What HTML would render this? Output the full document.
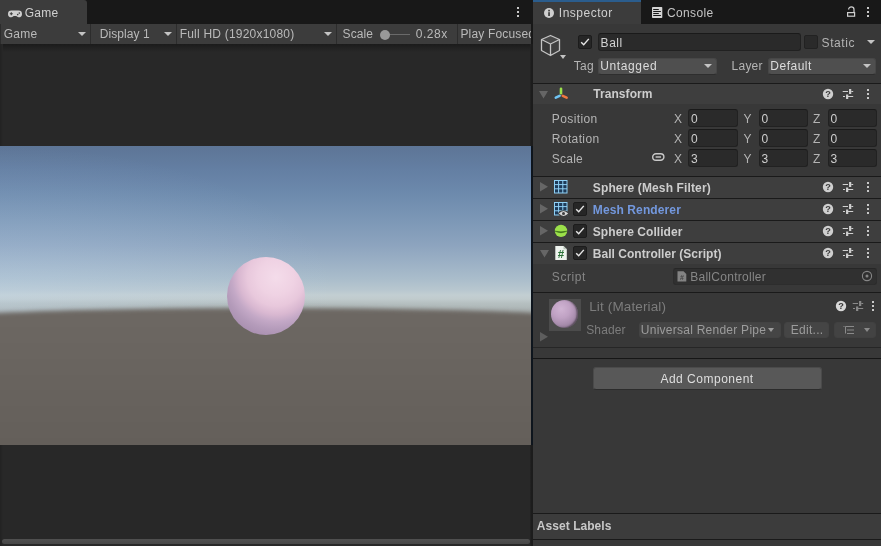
<!DOCTYPE html>
<html><head><meta charset="utf-8">
<style>
*{box-sizing:border-box;margin:0;padding:0}
html,body{width:881px;height:546px;overflow:hidden;background:#181818}
body{font-family:"Liberation Sans",sans-serif;font-size:12px;color:#bababa;position:relative}
.abs,svg{position:absolute}
.t{position:absolute;white-space:nowrap;line-height:14px;height:14px}
.b{font-weight:bold}
.fld{position:absolute;background:#2a2a2a;border:1px solid #212121;border-top-color:#1a1a1a;border-radius:3px;height:18px}
.dd{position:absolute;background:#4f4f4f;border:1px solid #474747;border-bottom-color:#2e2e2e;border-radius:3px;height:16.500px}
.arr{position:absolute;width:0;height:0;border-left:4px solid transparent;border-right:4px solid transparent;border-top:4.500px solid #c4c4c4}
.hdr{position:absolute;left:533px;width:348px;height:22px;background:#3e3e3e;border-top:1px solid #1a1a1a}
.cb{position:absolute;width:14px;height:14px;background:#262626;border:1px solid #1c1c1c;border-radius:2px}
.dot{position:absolute;width:2px;height:2px;background:#c8c8c8}
.sep{position:absolute;top:24px;width:1px;height:20px;background:#2c2c2c}
</style></head><body><div id="root" style="position:absolute;left:0;top:0;width:881px;height:546px;will-change:transform">

<div class="abs" style="left:0;top:0;width:533px;height:24px;background:#181818"></div>
<div class="abs" style="left:0;top:0;width:87px;height:24px;background:#3c3c3c;border-radius:0 3px 0 0"></div>
<svg style="left:7px;top:7.700px" width="16" height="12" viewBox="0 0 16 12"><path d="M4.400 2.500h7.200a3.400 3.400 0 0 1 0 6.800c-1 0-1.600-.5-2.200-1.200H6.600c-.6.700-1.200 1.200-2.200 1.200a3.400 3.400 0 0 1 0-6.800z" fill="#cfcfcf"/><path d="M4.300 4.300v3M2.800 5.800h3" stroke="#3c3c3c" stroke-width="1.100"/><circle cx="10.700" cy="6.600" r=".8" fill="#3c3c3c"/><circle cx="12.300" cy="5.100" r=".8" fill="#3c3c3c"/></svg>
<div class="t" style="left:24.70px;top:5.74px;line-height:14px;height:14px;letter-spacing:0.308px;color:#d0d0d0;">Game</div>
<div class="dot" style="left:517px;top:7px"></div>
<div class="dot" style="left:517px;top:11px"></div>
<div class="dot" style="left:517px;top:15px"></div>
<div class="abs" style="left:0;top:24px;width:531px;height:20px;background:#3c3c3c"></div>
<div class="sep" style="left:0"></div>
<div class="t" style="left:3.80px;top:26.94px;line-height:14px;height:14px;letter-spacing:0.241px;">Game</div>
<div class="arr" style="left:78px;top:32px"></div>
<div class="sep" style="left:90px"></div>
<div class="t" style="left:99.70px;top:26.94px;line-height:14px;height:14px;letter-spacing:0.069px;">Display 1</div>
<div class="arr" style="left:164px;top:32px"></div>
<div class="sep" style="left:176px"></div>
<div class="t" style="left:179.70px;top:26.94px;line-height:14px;height:14px;letter-spacing:0.210px;">Full HD (1920x1080)</div>
<div class="arr" style="left:324px;top:32px"></div>
<div class="sep" style="left:336px"></div>
<div class="t" style="left:342.60px;top:26.94px;line-height:14px;height:14px;letter-spacing:0.096px;">Scale</div>
<div class="abs" style="left:385px;top:34px;width:25px;height:1px;background:#6a6a6a"></div>
<div class="abs" style="left:380px;top:30px;width:10px;height:10px;border-radius:5px;background:#999"></div>
<div class="t" style="left:415.80px;top:26.94px;line-height:14px;height:14px;letter-spacing:0.512px;">0.28x</div>
<div class="sep" style="left:457px"></div>
<div class="t" style="left:460.40px;top:26.94px;line-height:14px;height:14px;letter-spacing:0.173px;width:70.600px;overflow:hidden;">Play Focused</div>
<div class="abs" style="left:0;top:44px;width:533px;height:502px;background:#282828"></div>
<div class="abs" style="left:0;top:44px;width:531px;height:8px;background:linear-gradient(#1b1b1b,#282828)"></div>
<div class="abs" style="left:530px;top:44px;width:3px;height:502px;background:linear-gradient(to right,#242424,#1c1c1c 1.500px)"></div>
<div class="abs" style="left:0;top:146px;width:531px;height:299px;overflow:hidden;background:linear-gradient(to bottom,#5d7596 0px,#647fa3 24px,#6c89ac 46px,#7c97b6 74px,#8ca3be 98px,#9bb0c5 116px,#aabdcb 133px,#b8c7cf 144px,#c2ced2 149px,#c0cbcd 153px,#b6c0c1 157px,#a9b1b1 166px)"><div class="abs" style="left:0;top:0;width:531px;height:175px;background:radial-gradient(ellipse 340px 150px at 0 150px,rgba(195,220,245,.26),rgba(195,220,245,0))"></div><div class="abs" style="left:-64.500px;top:161.500px;width:660px;height:170px;border-radius:330px 330px 0 0/12px 12px 0 0;background:linear-gradient(to bottom,#6d6863 0,#6b6661 30px,#645f5a 141px);filter:blur(2.200px)"></div></div>
<div class="abs" style="left:531px;top:146px;width:2px;height:299px;background:#0e151d"></div>
<div class="abs" style="left:227px;top:256.500px;width:78px;height:78px;border-radius:50%;background:radial-gradient(circle 60px at 63% 26%,#f4dcea 0%,#efd2e3 30%,#e8c8dc 48%,#d9b8d1 62%,#c3a8c6 74%,#b49bba 87%,#aa91b1 100%)"></div>
<div class="abs" style="left:0;top:44px;width:3px;height:102px;background:linear-gradient(to right,#222,#282828)"></div>
<div class="abs" style="left:0;top:445px;width:3px;height:101px;background:linear-gradient(to right,#222,#282828)"></div>
<div class="abs" style="left:2px;top:538.500px;width:528px;height:5.500px;border-radius:3px;background:linear-gradient(#505050,#474747)"></div>
<div class="abs" style="left:533px;top:0;width:348px;height:546px;background:#383838"></div>
<div class="abs" style="left:533px;top:0;width:348px;height:24px;background:#181818"></div>
<div class="abs" style="left:533px;top:0;width:108px;height:24px;background:#3c3c3c"></div>
<div class="abs" style="left:533px;top:0;width:108px;height:2px;background:#2b5d8d"></div>
<svg style="left:543px;top:7px" width="12" height="12" viewBox="0 0 12 12"><circle cx="6" cy="6" r="5" fill="#cfcfcf"/><rect x="5.200" y="5.200" width="1.700" height="3.800" fill="#3c3c3c"/><rect x="5.200" y="2.800" width="1.700" height="1.600" fill="#3c3c3c"/></svg>
<div class="t" style="left:558.80px;top:5.74px;line-height:14px;height:14px;letter-spacing:0.506px;color:#d0d0d0;">Inspector</div>
<svg style="left:652px;top:7px" width="11" height="11" viewBox="0 0 11 11"><rect x="0" y="0" width="10.300" height="11" rx=".8" fill="#d4d4d4"/><path d="M1.200 2.500H6.800M1.200 4.500H8.900M1.200 6.500H6.800M1.200 8.500H8.900" stroke="#181818" stroke-width="1"/></svg>
<div class="t" style="left:667.10px;top:5.74px;line-height:14px;height:14px;letter-spacing:0.329px;color:#c4c4c4;">Console</div>
<svg style="left:846px;top:6px" width="11" height="12" viewBox="0 0 11 12"><rect x="1.600" y="6.600" width="7" height="3.600" fill="none" stroke="#cfcfcf" stroke-width="1.200"/><path d="M2.600 3.600a2.700 2.700 0 0 1 5.400 0V6.600" fill="none" stroke="#cfcfcf" stroke-width="1.200"/></svg>
<div class="dot" style="left:867px;top:7px"></div>
<div class="dot" style="left:867px;top:11px"></div>
<div class="dot" style="left:867px;top:14.5px"></div>
<svg style="left:540px;top:34px" width="22" height="23" viewBox="0 0 22 23"><path d="M10.500 1.500L19.500 5.500L10.500 10L1.500 5.500Z" fill="#484848"/><path d="M10.500 10L19.500 5.500V16.500L10.500 21.500Z" fill="#404040"/><path d="M10.500 1.500L19.500 5.500V16.500L10.500 21.500L1.500 16.500V5.500Z M1.500 5.500L10.500 10L19.500 5.500 M10.500 10V21.500" fill="none" stroke="#c4c4c4" stroke-width="1.300" stroke-linejoin="round"/></svg>
<div class="arr" style="left:560px;top:55px;border-left-width:3.500px;border-right-width:3.500px;border-top-width:4px"></div>
<div class="cb" style="left:578px;top:35px"></div>
<svg style="left:578px;top:35px" width="14" height="14" viewBox="0 0 14 14"><path d="M3.200 7.300L5.700 9.800L10.800 3.900" fill="none" stroke="#e6e6e6" stroke-width="1.450"/></svg>
<div class="fld" style="left:598px;top:33px;width:203px"></div>
<div class="t" style="left:600.60px;top:35.94px;line-height:14px;height:14px;letter-spacing:0.530px;color:#d2d2d2;">Ball</div>
<div class="cb" style="left:804px;top:35px;background:#2a2a2a;border-color:#222"></div>
<div class="t" style="left:821.60px;top:35.94px;line-height:14px;height:14px;letter-spacing:0.578px;color:#b4b4b4;">Static</div>
<div class="arr" style="left:867px;top:40px"></div>
<div class="t" style="left:573.80px;top:59.04px;line-height:14px;height:14px;letter-spacing:0.327px;color:#b4b4b4;">Tag</div>
<div class="dd" style="left:598px;top:58px;width:119px"></div>
<div class="t" style="left:600.30px;top:59.04px;line-height:14px;height:14px;letter-spacing:0.609px;color:#dcdcdc;">Untagged</div>
<div class="arr" style="left:704px;top:64px"></div>
<div class="t" style="left:731.60px;top:59.04px;line-height:14px;height:14px;letter-spacing:0.221px;color:#b4b4b4;">Layer</div>
<div class="dd" style="left:767.500px;top:58px;width:108.500px"></div>
<div class="t" style="left:770.30px;top:59.04px;line-height:14px;height:14px;letter-spacing:0.497px;color:#dcdcdc;">Default</div>
<div class="arr" style="left:863px;top:64px"></div>
<div class="hdr" style="top:83px;height:21px"></div>
<svg style="left:539.2px;top:91.2px" width="9" height="8" viewBox="0 0 9 8"><path d="M0 0H9L4.500 7.500Z" fill="#666"/></svg>
<svg style="left:554px;top:87px" width="15" height="13" viewBox="0 0 15 13"><path d="M7 1.800V6.200" stroke="#9be24c" stroke-width="2.600" stroke-linecap="round"/><path d="M5.500 8.900L1.800 10.600" stroke="#6fc4f4" stroke-width="2.600" stroke-linecap="round"/><path d="M8.800 8.900L12.600 10.600" stroke="#f07840" stroke-width="2.600" stroke-linecap="round"/></svg>
<div class="t b" style="left:593.20px;top:87.44px;line-height:14px;height:14px;letter-spacing:0.077px;color:#cdcdcd;">Transform</div>
<svg style="left:822px;top:87.6px" width="12" height="12" viewBox="0 0 12 12"><circle cx="6" cy="6" r="5.200" fill="#cfcfcf"/><text x="6" y="9.300" font-family="Liberation Sans, sans-serif" font-size="9.200" font-weight="bold" text-anchor="middle" fill="#3e3e3e">?</text></svg>
<svg style="left:842px;top:88px" width="12" height="12" viewBox="0 0 12 12"><path d="M.7 3.500H6M9.300 3.500H11.200M1 8.500H3M6 8.500H11.200" stroke="#cfcfcf" stroke-width="1.100"/><path d="M8.150 1.100V6M5.150 6.400V10.900" stroke="#cfcfcf" stroke-width="2.200"/></svg>
<div class="dot" style="left:867px;top:89px;background:#c8c8c8"></div>
<div class="dot" style="left:867px;top:93px;background:#c8c8c8"></div>
<div class="dot" style="left:867px;top:97px;background:#c8c8c8"></div>
<div class="t" style="left:551.80px;top:111.64px;line-height:14px;height:14px;letter-spacing:0.387px;color:#b4b4b4;">Position</div>
<div class="t" style="left:674.00px;top:111.64px;line-height:14px;height:14px;color:#b4b4b4;">X</div>
<div class="fld" style="left:688px;top:109px;width:50px"></div>
<div class="t" style="left:691.00px;top:111.64px;line-height:14px;height:14px;color:#cecece;">0</div>
<div class="t" style="left:743.50px;top:111.64px;line-height:14px;height:14px;color:#b4b4b4;">Y</div>
<div class="fld" style="left:758.5px;top:109px;width:49px"></div>
<div class="t" style="left:761.50px;top:111.64px;line-height:14px;height:14px;color:#cecece;">0</div>
<div class="t" style="left:813.00px;top:111.64px;line-height:14px;height:14px;color:#b4b4b4;">Z</div>
<div class="fld" style="left:827.5px;top:109px;width:49px"></div>
<div class="t" style="left:830.50px;top:111.64px;line-height:14px;height:14px;color:#cecece;">0</div>
<div class="t" style="left:551.80px;top:131.64px;line-height:14px;height:14px;letter-spacing:0.373px;color:#b4b4b4;">Rotation</div>
<div class="t" style="left:674.00px;top:131.64px;line-height:14px;height:14px;color:#b4b4b4;">X</div>
<div class="fld" style="left:688px;top:129px;width:50px"></div>
<div class="t" style="left:691.00px;top:131.64px;line-height:14px;height:14px;color:#cecece;">0</div>
<div class="t" style="left:743.50px;top:131.64px;line-height:14px;height:14px;color:#b4b4b4;">Y</div>
<div class="fld" style="left:758.5px;top:129px;width:49px"></div>
<div class="t" style="left:761.50px;top:131.64px;line-height:14px;height:14px;color:#cecece;">0</div>
<div class="t" style="left:813.00px;top:131.64px;line-height:14px;height:14px;color:#b4b4b4;">Z</div>
<div class="fld" style="left:827.5px;top:129px;width:49px"></div>
<div class="t" style="left:830.50px;top:131.64px;line-height:14px;height:14px;color:#cecece;">0</div>
<div class="t" style="left:551.80px;top:151.64px;line-height:14px;height:14px;letter-spacing:0.221px;color:#b4b4b4;">Scale</div>
<div class="t" style="left:674.00px;top:151.64px;line-height:14px;height:14px;color:#b4b4b4;">X</div>
<div class="fld" style="left:688px;top:149px;width:50px"></div>
<div class="t" style="left:691.00px;top:151.64px;line-height:14px;height:14px;color:#cecece;">3</div>
<div class="t" style="left:743.50px;top:151.64px;line-height:14px;height:14px;color:#b4b4b4;">Y</div>
<div class="fld" style="left:758.5px;top:149px;width:49px"></div>
<div class="t" style="left:761.50px;top:151.64px;line-height:14px;height:14px;color:#cecece;">3</div>
<div class="t" style="left:813.00px;top:151.64px;line-height:14px;height:14px;color:#b4b4b4;">Z</div>
<div class="fld" style="left:827.5px;top:149px;width:49px"></div>
<div class="t" style="left:830.50px;top:151.64px;line-height:14px;height:14px;color:#cecece;">3</div>
<svg style="left:651.800px;top:153.400px" width="14" height="9" viewBox="0 0 14 9"><rect x=".7" y=".7" width="11.200" height="6.600" rx="3.300" fill="none" stroke="#cacaca" stroke-width="1.400"/><path d="M3.600 4H9" stroke="#cacaca" stroke-width="1.400"/></svg>
<div class="hdr" style="top:176px"></div>
<svg style="left:540px;top:182px" width="8" height="10" viewBox="0 0 8 10"><path d="M0 0V9.500L8 4.750Z" fill="#666"/></svg>
<div class="t b" style="left:592.80px;top:180.54px;line-height:14px;height:14px;letter-spacing:0.134px;color:#cdcdcd;">Sphere (Mesh Filter)</div>
<svg style="left:822px;top:180.7px" width="12" height="12" viewBox="0 0 12 12"><circle cx="6" cy="6" r="5.200" fill="#cfcfcf"/><text x="6" y="9.300" font-family="Liberation Sans, sans-serif" font-size="9.200" font-weight="bold" text-anchor="middle" fill="#3e3e3e">?</text></svg>
<svg style="left:842px;top:181px" width="12" height="12" viewBox="0 0 12 12"><path d="M.7 3.500H6M9.300 3.500H11.200M1 8.500H3M6 8.500H11.200" stroke="#cfcfcf" stroke-width="1.100"/><path d="M8.150 1.100V6M5.150 6.400V10.900" stroke="#cfcfcf" stroke-width="2.200"/></svg>
<div class="dot" style="left:867px;top:182px;background:#c8c8c8"></div>
<div class="dot" style="left:867px;top:186px;background:#c8c8c8"></div>
<div class="dot" style="left:867px;top:190px;background:#c8c8c8"></div>
<div class="hdr" style="top:198px"></div>
<svg style="left:540px;top:204px" width="8" height="10" viewBox="0 0 8 10"><path d="M0 0V9.500L8 4.750Z" fill="#666"/></svg>
<div class="t b" style="left:592.80px;top:202.54px;line-height:14px;height:14px;letter-spacing:0.109px;color:#7398de;">Mesh Renderer</div>
<svg style="left:822px;top:202.7px" width="12" height="12" viewBox="0 0 12 12"><circle cx="6" cy="6" r="5.200" fill="#cfcfcf"/><text x="6" y="9.300" font-family="Liberation Sans, sans-serif" font-size="9.200" font-weight="bold" text-anchor="middle" fill="#3e3e3e">?</text></svg>
<svg style="left:842px;top:203px" width="12" height="12" viewBox="0 0 12 12"><path d="M.7 3.500H6M9.300 3.500H11.200M1 8.500H3M6 8.500H11.200" stroke="#cfcfcf" stroke-width="1.100"/><path d="M8.150 1.100V6M5.150 6.400V10.900" stroke="#cfcfcf" stroke-width="2.200"/></svg>
<div class="dot" style="left:867px;top:204px;background:#c8c8c8"></div>
<div class="dot" style="left:867px;top:208px;background:#c8c8c8"></div>
<div class="dot" style="left:867px;top:212px;background:#c8c8c8"></div>
<div class="hdr" style="top:220px"></div>
<svg style="left:540px;top:226px" width="8" height="10" viewBox="0 0 8 10"><path d="M0 0V9.500L8 4.750Z" fill="#666"/></svg>
<div class="t b" style="left:592.80px;top:224.54px;line-height:14px;height:14px;letter-spacing:0.065px;color:#cdcdcd;">Sphere Collider</div>
<svg style="left:822px;top:224.7px" width="12" height="12" viewBox="0 0 12 12"><circle cx="6" cy="6" r="5.200" fill="#cfcfcf"/><text x="6" y="9.300" font-family="Liberation Sans, sans-serif" font-size="9.200" font-weight="bold" text-anchor="middle" fill="#3e3e3e">?</text></svg>
<svg style="left:842px;top:225px" width="12" height="12" viewBox="0 0 12 12"><path d="M.7 3.500H6M9.300 3.500H11.200M1 8.500H3M6 8.500H11.200" stroke="#cfcfcf" stroke-width="1.100"/><path d="M8.150 1.100V6M5.150 6.400V10.900" stroke="#cfcfcf" stroke-width="2.200"/></svg>
<div class="dot" style="left:867px;top:226px;background:#c8c8c8"></div>
<div class="dot" style="left:867px;top:230px;background:#c8c8c8"></div>
<div class="dot" style="left:867px;top:234px;background:#c8c8c8"></div>
<div class="hdr" style="top:242px"></div>
<svg style="left:539.5px;top:249.5px" width="9" height="8" viewBox="0 0 9 8"><path d="M0 0H9L4.500 7.500Z" fill="#666"/></svg>
<div class="t b" style="left:592.80px;top:246.54px;line-height:14px;height:14px;letter-spacing:0.026px;color:#cdcdcd;">Ball Controller (Script)</div>
<svg style="left:822px;top:246.7px" width="12" height="12" viewBox="0 0 12 12"><circle cx="6" cy="6" r="5.200" fill="#cfcfcf"/><text x="6" y="9.300" font-family="Liberation Sans, sans-serif" font-size="9.200" font-weight="bold" text-anchor="middle" fill="#3e3e3e">?</text></svg>
<svg style="left:842px;top:247px" width="12" height="12" viewBox="0 0 12 12"><path d="M.7 3.500H6M9.300 3.500H11.200M1 8.500H3M6 8.500H11.200" stroke="#cfcfcf" stroke-width="1.100"/><path d="M8.150 1.100V6M5.150 6.400V10.900" stroke="#cfcfcf" stroke-width="2.200"/></svg>
<div class="dot" style="left:867px;top:248px;background:#c8c8c8"></div>
<div class="dot" style="left:867px;top:252px;background:#c8c8c8"></div>
<div class="dot" style="left:867px;top:256px;background:#c8c8c8"></div>
<svg style="left:554px;top:180px" width="15" height="15" viewBox="0 0 15 15"><rect x=".5" y=".5" width="12.500" height="12.500" fill="#1d3a58" stroke="#8fd0f5" stroke-width="1"/><path d="M4.600 .5V13M8.800 .5V13M.5 4.600H13M.5 8.800H13" stroke="#8fd0f5" stroke-width="1"/></svg>
<svg style="left:554px;top:202px" width="15" height="15" viewBox="0 0 15 15"><rect x=".5" y=".5" width="12.500" height="12.500" fill="#1d3a58" stroke="#8fd0f5" stroke-width="1"/><path d="M4.600 .5V13M8.800 .5V13M.5 4.600H13M.5 8.800H13" stroke="#8fd0f5" stroke-width="1"/><ellipse cx="9.500" cy="11.500" rx="5.400" ry="3.300" fill="#3e3e3e"/><path d="M4.800 11.500Q9.500 6.500 14.200 11.500Q9.500 16.300 4.800 11.500Z" fill="#d8d8d8"/><circle cx="9.500" cy="11.500" r="1.500" fill="#3e3e3e"/></svg>
<div class="cb" style="left:573px;top:202px"></div>
<svg style="left:573px;top:202px" width="14" height="14" viewBox="0 0 14 14"><path d="M3.200 7.300L5.700 9.800L10.800 3.900" fill="none" stroke="#e6e6e6" stroke-width="1.450"/></svg>
<svg style="left:554px;top:224px" width="14" height="14" viewBox="0 0 14 14"><circle cx="7" cy="6.900" r="6.200" fill="#9be04a"/><path d="M.9 7.100Q7 10.400 13.100 7.100Q7 8.600 .9 7.100Z" fill="#2f5f14" stroke="#2f5f14" stroke-width=".4"/></svg>
<div class="cb" style="left:573px;top:224px"></div>
<svg style="left:573px;top:224px" width="14" height="14" viewBox="0 0 14 14"><path d="M3.200 7.300L5.700 9.800L10.800 3.900" fill="none" stroke="#e6e6e6" stroke-width="1.450"/></svg>
<svg style="left:555px;top:246px" width="12" height="14" viewBox="0 0 12 14"><path d="M.3 0H8.500L11.800 3.300V14H.3Z" fill="#eef3ee"/><path d="M8.500 0V3.300H11.800Z" fill="#b8c4b8"/><text x="5.900" y="11.600" font-family="Liberation Sans, sans-serif" font-size="11.500" font-weight="bold" text-anchor="middle" fill="#2a7036">#</text></svg>
<div class="cb" style="left:573px;top:246px"></div>
<svg style="left:573px;top:246px" width="14" height="14" viewBox="0 0 14 14"><path d="M3.200 7.300L5.700 9.800L10.800 3.900" fill="none" stroke="#e6e6e6" stroke-width="1.450"/></svg>
<div class="t" style="left:551.80px;top:269.84px;line-height:14px;height:14px;letter-spacing:0.585px;color:#868686;">Script</div>
<div class="fld" style="left:673px;top:268px;width:204px;height:17px;background:#303030;border-color:#2d2d2d;border-top-color:#272727"></div>
<svg style="left:677px;top:271px" width="10" height="11" viewBox="0 0 10 11"><path d="M.5 .3H6.500L9.300 3V10.500H.5Z" fill="#838383"/><text x="4.900" y="8.800" font-family="Liberation Sans, sans-serif" font-size="7" font-weight="bold" text-anchor="middle" fill="#444">#</text></svg>
<div class="t" style="left:690.20px;top:269.84px;line-height:14px;height:14px;letter-spacing:0.275px;color:#868686;">BallController</div>
<svg style="left:861px;top:270px" width="12" height="12" viewBox="0 0 12 12"><circle cx="6" cy="6" r="4.600" fill="none" stroke="#868686" stroke-width="1.100"/><circle cx="6" cy="6" r="1.500" fill="#868686"/></svg>
<div class="abs" style="left:533px;top:292px;width:348px;height:1px;background:#1a1a1a"></div>
<div class="abs" style="left:549px;top:299px;width:32px;height:32px;background:#4c4c4c"></div>
<div class="abs" style="left:550.500px;top:300px;width:27.600px;height:27.600px;border-radius:50%;background:radial-gradient(circle 22px at 38% 32%,#d0b4d3 0%,#c0a2c4 40%,#a98eae 70%,#8d7593 100%);box-shadow:inset -1.500px -.5px 1.500px rgba(30,30,30,.5)"></div>
<div class="t" style="left:589.20px;top:298.62px;line-height:16px;height:16px;font-size:13.5px;letter-spacing:0.138px;color:#7c7c7c;">Lit (Material)</div>
<svg style="left:835px;top:300px" width="12" height="12" viewBox="0 0 12 12"><circle cx="6" cy="6" r="5.200" fill="#d8d8d8"/><text x="6" y="9.300" font-family="Liberation Sans, sans-serif" font-size="9.200" font-weight="bold" text-anchor="middle" fill="#383838">?</text></svg>
<svg style="left:852px;top:300px" width="12" height="12" viewBox="0 0 12 12"><path d="M.7 3.500H6M9.300 3.500H11.200M1 8.500H3M6 8.500H11.200" stroke="#8a8a8a" stroke-width="1.100"/><path d="M8.150 1.100V6M5.150 6.400V10.900" stroke="#8a8a8a" stroke-width="2.200"/></svg>
<div class="dot" style="left:871.9px;top:301.2px;background:#c8c8c8"></div>
<div class="dot" style="left:871.9px;top:304.9px;background:#c8c8c8"></div>
<div class="dot" style="left:871.9px;top:308.7px;background:#c8c8c8"></div>
<div class="t" style="left:586.20px;top:323.44px;line-height:14px;height:14px;letter-spacing:0.141px;color:#7c7c7c;">Shader</div>
<div class="dd" style="left:638.500px;top:322px;width:142px;height:15.500px;background:#454545;border-color:#434343"></div>
<div class="t" style="left:640.80px;top:323.44px;line-height:14px;height:14px;letter-spacing:0.252px;color:#9c9c9c;">Universal Render Pipe</div>
<div class="arr" style="left:768px;top:328px;border-top-color:#9c9c9c;border-left-width:3.500px;border-right-width:3.500px;border-top-width:4px"></div>
<div class="dd" style="left:784px;top:322px;width:45px;height:15.500px;background:#454545;border-color:#434343"></div>
<div class="t" style="left:790.80px;top:323.44px;line-height:14px;height:14px;letter-spacing:0.287px;color:#9c9c9c;">Edit...</div>
<div class="dd" style="left:834.200px;top:322px;width:42px;height:15.500px;background:#434343;border-color:#414141"></div>
<svg style="left:843px;top:325px" width="12" height="10" viewBox="0 0 12 10"><path d="M2.500 1.500H11M4 5H11M4 8.500H11M.5 1.500H1.500M2.500 1.500V8.500" stroke="#8a8a8a" stroke-width="1" fill="none"/></svg>
<div class="arr" style="left:864px;top:328px;border-top-color:#8a8a8a;border-left-width:3.500px;border-right-width:3.500px;border-top-width:4px"></div>
<svg style="left:540px;top:332px" width="8" height="10" viewBox="0 0 8 10"><path d="M0 0V9.500L8 4.750Z" fill="#5e5e5e"/></svg>
<div class="abs" style="left:533px;top:347px;width:348px;height:1px;background:#262626"></div>
<div class="abs" style="left:533px;top:358px;width:348px;height:1px;background:#161616"></div>
<div class="abs" style="left:592.500px;top:367px;width:229px;height:23px;background:#585858;border:1px solid #4a4a4a;border-bottom-color:#2c2c2c;border-radius:3px"></div>
<div class="t" style="left:660.40px;top:371.94px;line-height:14px;height:14px;letter-spacing:0.507px;color:#dedede;">Add Component</div>
<div class="abs" style="left:533px;top:513px;width:348px;height:27px;background:#3c3c3c;border-top:1px solid #1a1a1a;border-bottom:1px solid #1a1a1a"></div>
<div class="t b" style="left:536.80px;top:519.24px;line-height:14px;height:14px;letter-spacing:0.052px;color:#c8c8c8;">Asset Labels</div>
</div></body></html>
